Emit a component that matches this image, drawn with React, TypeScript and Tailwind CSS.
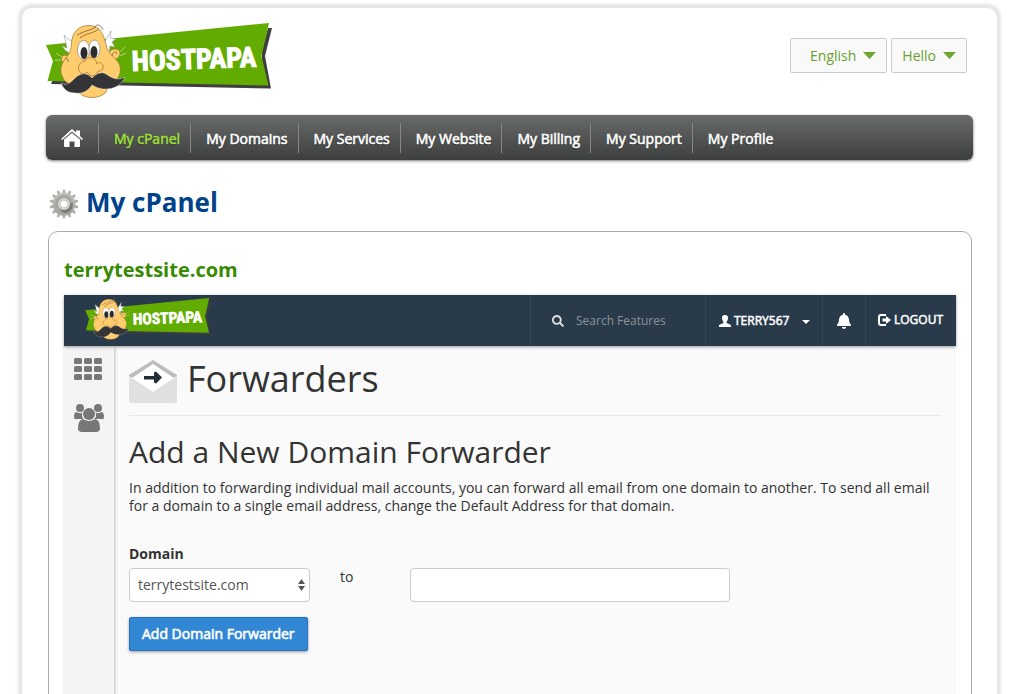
import { FaBell, FaSearch } from "react-icons/fa";

const navItems = ["My cPanel", "My Domains", "My Services", "My Website", "My Billing", "My Support", "My Profile"];

function Logo({ className }: { className: string }) {
  return (
    <svg viewBox="44 20 230 80" className={className} role="img" aria-label="HostPapa">
      <path d="M272 28 L265 56 L271 88.5 L51 84 L53 79 L262 80 L262 50 L268 28 Z" fill="#3f3f42" />
      <path d="M46 45 L269 23 L261.500 56 L268.500 85.500 L47.500 81 L53 61 Z" fill="#62ab00" />
      <g fill="none" stroke="#c9d8b0" strokeWidth=".8">
        <path d="M62 57 L56 53 M61 60 L55 60 M119 53 L125 47 M120 56 L126 53" />
      </g>
      <g fill="#fff" stroke="#999" strokeWidth=".6">
        <path d="M72 55 L65 50 L62 46 L67 48 L64 35 L69 40 L76 41 Z" />
        <path d="M104 43 L111 31 L110 38 L116 39 L112 42 L115 47 L110 46 L109 54 Z" />
      </g>
      <g fill="#ffcd6e" stroke="#9a7433" strokeWidth=".7">
        <path d="M70 57 C64 53 60 56 62 61 C63 64 67 65 70 64 Z" />
        <path d="M108 54 C111 47 120 48 120 53 C120 58 115 60 110 60 Z" />
        <path d="M88 25.500 C78 26 72 33 71.500 43 C71 50 70 53 66 58 C61 64 59 70 63 78 C66 84 72 85 78 85 C76 93 83 97.500 92 97.500 C100 97.500 108 94 108 85 C116 83 122 75 120 66 C118 59 110 56 107 48 C104 37 102 25 88 25.500 Z" />
      </g>
      <path d="M77 35 C84 31 89 31 96 27 M80 38 C86 33 92 34 99 29 M95 27 C96 24 101 24 103 30 M65 59 C66 57 69 59 68 62 M112 56 C113 51 117 51 117 54" fill="none" stroke="#7d5a28" strokeWidth=".8" />
      <g fill="#fff" stroke="#777" strokeWidth=".6">
        <ellipse cx="83.500" cy="50" rx="6" ry="9.500" />
        <ellipse cx="94.500" cy="49" rx="5.500" ry="9" />
      </g>
      <ellipse cx="84" cy="53" rx="3.500" ry="6" fill="#2b2b2b" />
      <ellipse cx="94" cy="52" rx="3.500" ry="6" fill="#2b2b2b" />
      <path d="M85 61 C81 61 77 66 79 71 C81 75 85 74 87 72 C89 77 97 77 98 71 C102 72 105 67 102 64 C101 62 98 62 97 64 C96 56 87 56 85 61" fill="#ffcd6e" stroke="#a87632" strokeWidth=".8" />
      <path d="M61 83 C71 88 73 76 82 74 C87 73 90 76 92 78 C96 74 101 71 106 74 C112 78 117 81 125 77 C121 86 113 89 106 89 C99 89 96 87 92 85 C88 91 82 94 76 93 C68 93 64 90 61 83 Z" fill="#343436" stroke="#eee" strokeWidth=".4" />
      <text x="132" y="71" fill="#fff" stroke="#fff" strokeWidth="1" transform="rotate(-2 132 71)" className="font-['Roboto_Condensed','Roboto',sans-serif] text-[28px] font-bold">HOSTPAPA</text>
    </svg>
  );
}

function HomeIcon() {
  return (
    <svg viewBox="0 0 22 18" className="h-[18px] w-[22px]" fill="#fff" aria-hidden="true">
      <path d="M11 0 L15 3.500 V1.500 H19 V7 L22 10 L21 11 L11 2.500 L1 11 L0 10 Z" />
      <path d="M11 4 L19 10.500 V17 Q19 18 18 18 H13.500 V12.500 H8.500 V18 H4 Q3 18 3 17 V10.500 Z" />
    </svg>
  );
}

const teeth = Array.from({ length: 14 }, (_, i) => (i * 360) / 14);

function GearIcon() {
  return (
    <svg viewBox="0 0 30 30" className="size-[30px]" aria-hidden="true">
      <defs>
        <linearGradient id="gear" x2="0" y2="1">
          <stop stopColor="#c2c2be" />
          <stop offset="1" stopColor="#a3a39f" />
        </linearGradient>
      </defs>
      {teeth.map((angle) => (
        <path key={angle} d="M13 6 L14 .5 H16 L17 6 Z" fill="#b0b0ac" transform={`rotate(${angle} 15 15)`} />
      ))}
      <circle cx="15" cy="15" r="11.500" fill="url(#gear)" />
      <circle cx="15" cy="15" r="9" fill="#a5a5a1" />
      <path d="M10 18 L13 23 C19 26 24 21 24 15 L19 13 Z" fill="#7c7c77" />
      <circle cx="15" cy="15" r="6" fill="#d2d2ce" />
      <circle cx="15" cy="15" r="3" fill="#fff" />
    </svg>
  );
}

function UserIcon() {
  return (
    <svg viewBox="0 0 12 12" className="size-3" fill="#fff" aria-hidden="true">
      <path d="M6 0 C8.500 0 9.200 1.500 9 3.500 C9 5 8 6 7.500 7 V8 C9 9 12 9 12 11 V12 H0 V11 C0 9 3 9 4.500 8 V7 C4 6 3 5 3 3.500 C2.800 1.500 3.500 0 6 0 Z" />
    </svg>
  );
}

function LogoutIcon() {
  return (
    <svg viewBox="0 0 13 12" className="h-3 w-[13px]" aria-hidden="true">
      <path d="M8 1 H3 Q1 1 1 3 V9 Q1 11 3 11 H8" fill="none" stroke="#fff" strokeWidth="2" />
      <path d="M4.500 4.500 H8 V2 L13 6 L8 10 V7.500 H4.500 Z" fill="#fff" />
    </svg>
  );
}

function GridIcon() {
  return (
    <svg viewBox="0 0 28 22" className="h-[22px] w-7" fill="#777" aria-hidden="true">
      {[0, 8, 16].map((y) => [0, 10, 20].map((x) => <rect key={`${x}-${y}`} x={x} y={y} width="8" height="6" rx="1.500" />))}
    </svg>
  );
}

function UsersIcon() {
  return (
    <svg viewBox="0 0 30 28" className="h-7 w-[30px]" fill="#777" aria-hidden="true">
      <circle cx="6" cy="4" r="4" />
      <circle cx="24" cy="4" r="4" />
      <path d="M2 8 Q6 10 8.500 8.500 Q7 12 9.500 15 H3 Q0 16 0 13 Q0 9 2 8 Z M28 8 Q24 10 21.500 8.500 Q23 12 20.500 15 H27 Q30 16 30 13 Q30 9 28 8 Z" />
      <circle cx="15" cy="10" r="6" />
      <path d="M9 15 Q15 19 21 15 Q26 16 26 24 Q26 28 22 28 H8 Q4 28 4 24 Q4 16 9 15 Z" />
    </svg>
  );
}

function EnvelopeIcon() {
  return (
    <svg viewBox="0 0 48 43" className="h-[43px] w-12" aria-hidden="true">
      <path d="M0 15 L24 0 L48 15 V20 H0 Z" fill="#bdbdbd" />
      <path d="M0 16 L24 26 L48 16 V41 Q48 43 46 43 H2 Q0 43 0 41 Z" fill="#e0e0e0" />
      <path d="M3 18 L24 4 L45 18 L24 32 Z" fill="#fff" />
      <path d="M15 16 H25 V12.500 L27 11.500 L33 17.500 L27 23.500 L25 22.500 V19.500 H15 Z" fill="#222f3b" />
    </svg>
  );
}

function TopButton({ label, className }: { label: string; className: string }) {
  return (
    <button type="button" className={`flex h-[35px] items-center gap-[7px] rounded-xs border border-[#ccc] bg-[#f9f9f9] pr-2.5 text-sm text-[#6a9f2b] ${className}`}>
      {label}
      <svg viewBox="0 0 13 7" className="h-[7px] w-[13px]" fill="#6fa52f" aria-hidden="true"><path d="M0 0 H13 L6.500 7 Z" /></svg>
    </button>
  );
}

export default function App() {
  return (
    <div className="h-screen overflow-hidden bg-white font-['Open_Sans',sans-serif] text-[#333]">
      <div className="mt-2 mr-6 ml-[22px] min-h-screen rounded-t-[10px] px-6 pt-3 shadow-[0_0_3px_4px_#e6e6e6]">
        <header className="flex items-start justify-between pr-1.5">
          <a href="#" className="-ml-0.5 block"><Logo className="h-20 w-[230px]" /></a>
          <div className="flex gap-1 pt-[18px]">
            <TopButton label="English" className="pl-[19px]" />
            <TopButton label="Hello" className="pl-2.5" />
          </div>
        </header>

        <nav aria-label="Main" className="mt-[15px] flex h-[45px] items-center rounded-md bg-linear-to-b from-[#6a6c6b] to-[#3d3f3e] pl-[15px] shadow-[0_1px_3px_#777]">
          <a href="#" aria-label="Home" className="pr-[15px]"><HomeIcon /></a>
          {navItems.map((item) => (
            <a key={item} href="#" className="flex h-[30px] items-center border-l border-[#858786] pt-0.5 pr-2.5 pl-[15px] text-sm text-white [-webkit-text-stroke:0.6px_currentColor] text-shadow-[0_1px_1px_#222] nth-2:text-[#9ade3c]">
              {item}
            </a>
          ))}
        </nav>

        <div className="mt-6 flex items-center gap-[7px] pl-[3px]">
          <span className="pt-1"><GearIcon /></span>
          <h1 className="text-[26px] leading-9 font-bold text-[#00438a]">My cPanel</h1>
        </div>

        <main className="mt-[11px] mr-px ml-0.5 rounded-[10px] border border-[#aaa] px-[15px] pt-6 pb-6">
          <h2 className="text-[20px] leading-7 font-bold text-[#388a00]">terrytestsite.com</h2>

          <div className="mt-[11px] min-h-[480px] bg-[#fafafa]">
            <div className="relative flex h-[51px] items-stretch justify-between bg-[#293a4a] shadow-[0_1px_3px_#999]">
              <a href="#" className="ml-5 flex items-start pt-px"><Logo className="h-[45px] w-[128px]" /></a>
              <div className="flex *:border-l *:border-[#334556]">
                <label className="flex w-[175px] items-center gap-3 pl-[21px]">
                  <FaSearch className="size-3 shrink-0 text-[#ddd]" />
                  <input type="search" placeholder="Search Features" aria-label="Search Features" className="w-32 bg-transparent text-xs text-white placeholder:text-[#8b9299]" />
                </label>
                <button type="button" className="flex w-[117px] items-center pl-[13px] text-xs text-white [-webkit-text-stroke:0.5px_currentColor]">
                  <UserIcon />
                  <span className="ml-[3px]">TERRY567</span>
                  <svg viewBox="0 0 8 4" className="mt-0.5 ml-[13px] h-1 w-2" fill="#fff" aria-hidden="true"><path d="M0 0 H8 L4 4 Z" /></svg>
                </button>
                <button type="button" aria-label="Notifications" className="flex w-[43px] items-center justify-center text-white"><FaBell className="size-4" /></button>
                <a href="#" className="flex w-[91px] items-center gap-[3px] pb-0.5 pl-3 text-xs text-white [-webkit-text-stroke:0.5px_currentColor]"><LogoutIcon />LOGOUT</a>
              </div>
            </div>

            <div className="flex min-h-[429px]">
              <aside className="flex w-[50px] flex-col items-start gap-6 bg-[#f4f4f4] pt-3 pl-2.5 shadow-[1px_0_3px_#bbb]">
                <a href="#" aria-label="Home"><GridIcon /></a>
                <a href="#" aria-label="User manager"><UsersIcon /></a>
              </aside>

              <section className="min-w-0 flex-1 px-[15px] pt-[13px]">
                <div className="flex items-start gap-2.5 border-b border-[#e8e8e8] pb-3">
                  <span className="pt-px"><EnvelopeIcon /></span>
                  <h1 className="text-4xl">Forwarders</h1>
                </div>
                <h2 className="mt-4 text-3xl leading-10">Add a New Domain Forwarder</h2>
                <p className="mt-[7px] text-sm leading-[18px]">
                  In addition to forwarding individual mail accounts, you can forward all email from one domain to another. To send all email for a domain to a single email address, change the Default Address for that domain.
                </p>

                <form className="mt-[30px] text-sm" onSubmit={(event) => event.preventDefault()}>
                  <label htmlFor="domain" className="block leading-[18px] font-bold">Domain</label>
                  <div className="mt-[5px] flex">
                    <div className="relative w-[181px]">
                      <select id="domain" className="h-[34px] w-full appearance-none rounded border border-[#ccc] bg-white px-2 text-sm text-[#555]">
                        <option>terrytestsite.com</option>
                      </select>
                      <svg viewBox="0 0 7 12" className="pointer-events-none absolute top-[11px] right-[5px] h-3 w-[7px]" fill="#555" aria-hidden="true"><path d="M3.500 0 L7 5 H0 Z M3.500 12 L0 7 H7 Z" /></svg>
                    </div>
                    <label htmlFor="target" className="w-[100px] pl-[30px] leading-[18px]">to</label>
                    <input id="target" type="text" className="h-[34px] w-80 rounded border border-[#ccc] bg-white px-2" />
                  </div>
                  <button type="submit" className="mt-[15px] h-[34px] rounded-xs border border-[#2574bd] bg-[#3287d5] px-3 text-white shadow-[0_1px_3px_#999] [-webkit-text-stroke:0.6px_currentColor]">Add Domain Forwarder</button>
                </form>
              </section>
            </div>
          </div>
        </main>
      </div>
    </div>
  );
}
